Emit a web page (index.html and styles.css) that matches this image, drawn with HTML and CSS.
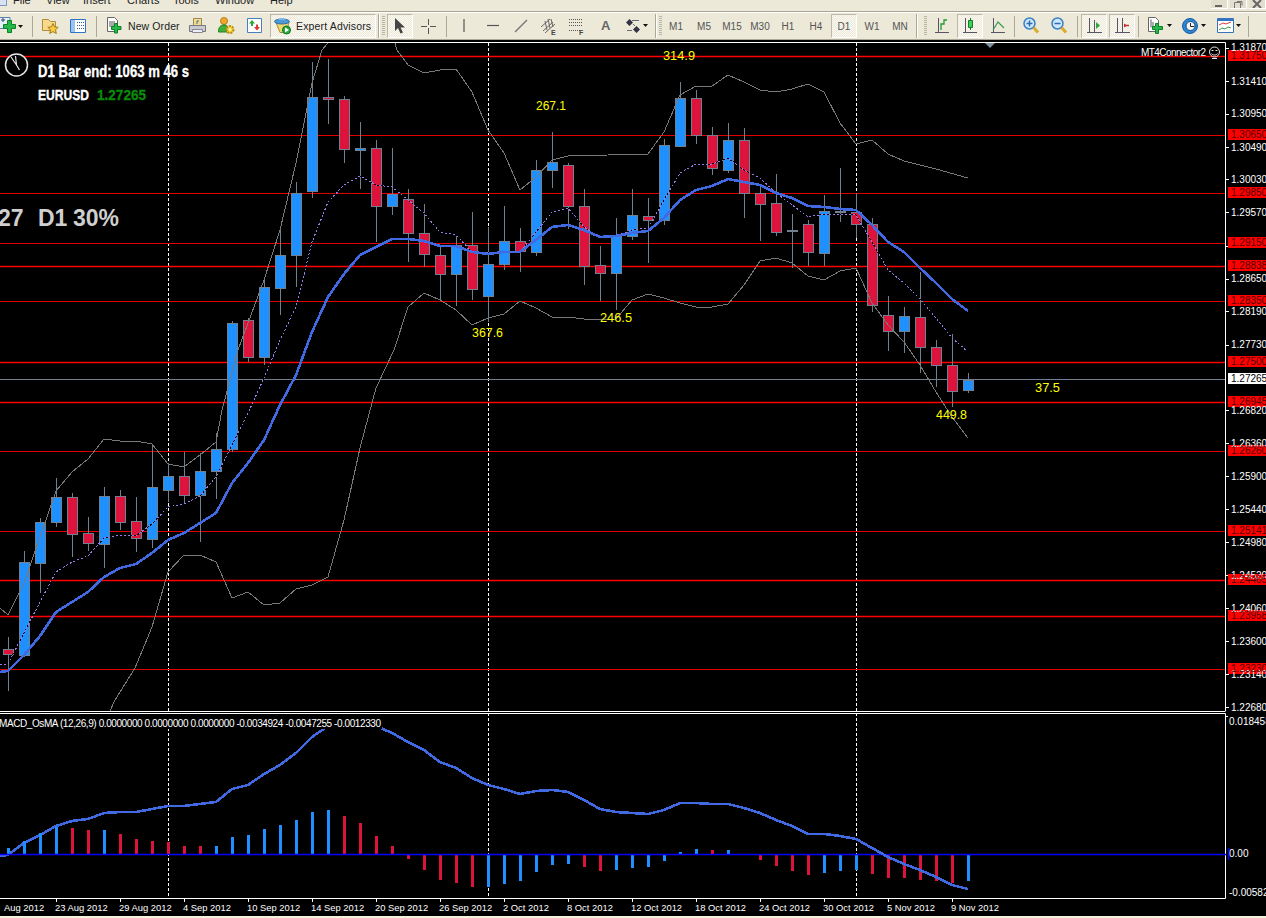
FILE: index.html
```html
<!DOCTYPE html>
<html lang="en">
<head>
<meta charset="utf-8">
<title>MetaTrader 4 - EURUSD D1</title>
<link rel="stylesheet" href="styles.css">
</head>
<body>
<header class="menubar">
  <span class="app-icon"></span>
  <span class="menu-item">File</span>
  <span class="menu-item">View</span>
  <span class="menu-item">Insert</span>
  <span class="menu-item">Charts</span>
  <span class="menu-item">Tools</span>
  <span class="menu-item">Window</span>
  <span class="menu-item">Help</span>
  <span class="win-buttons">
    <span class="win-btn"><svg width="16" height="8" viewBox="0 0 16 8"><path class="g-dark" d="M4 5h7v2H4z"/></svg></span>
    <span class="win-btn"><svg width="16" height="8" viewBox="0 0 16 8"><path class="s-dark" d="M4.5 2.5h6v6h-6zM7 1.5h5v4"/></svg></span>
    <span class="win-btn"><svg width="16" height="8" viewBox="0 0 16 8"><path class="s-dark2" d="M4 0l8 8M12 0L4 8"/></svg></span>
  </span>
</header>

<nav class="toolbar">
  <svg class="w16" height="18" viewBox="0 0 16 18"><path fill="#e6eefa" stroke="#5c82b4" d="M-2 .5h12v11H-2z"/><path stroke="#33486a" d="M1 3h4M3 1v4"/><path fill="#27b84a" stroke="#0d7f25" d="M7.5 3.5h4v4h4v4h-4v4h-4v-4h-4v-4h4z"/></svg>
  <svg class="w5 m2" height="18" viewBox="0 0 5 18"><path d="M0 8h5l-2.500 3z"/></svg>
  <i class="sep m9"></i>
  <svg class="w18 m8" height="18" viewBox="0 0 18 18"><path fill="#f6d98a" stroke="#b08c3a" d="M1.500 2.500h6l2 2h5v9h-13z"/><path fill="#f7cb45" stroke="#a67c14" d="M12 6.500l1.600 3.400 3.600.4-2.700 2.500.8 3.700-3.300-1.900-3.300 1.900.8-3.700-2.700-2.500 3.600-.4z"/></svg>
  <svg class="w16 m11" height="18" viewBox="0 0 16 18"><path fill="#fff" stroke="#2f74c8" d="M.5 2.500h15v13H.5z"/><path fill="#9cc2ee" d="M1 3h4v12H1z"/><path stroke="#2b5a94" stroke-dasharray="1 1" d="M7 5.500h7M7 8.500h7M7 11.500h7"/></svg>
  <i class="sep m10"></i>
  <svg class="w16 m10" height="18" viewBox="0 0 16 18"><path fill="#fff" stroke="#666" d="M.5.500h7l3 3v11H.5z"/><path stroke="#555" d="M2 5h6M2 7h6M2 9h6"/><path fill="#27b84a" stroke="#0d7f25" d="M7.500 6.500h3v3h3.500v3h-3.500v3.500h-3v-3.500h-3v-3h3z"/></svg>
  <span class="tb-label m5 w51">New Order</span>
  <svg class="w17 m10" height="18" viewBox="0 0 17 18"><path fill="#f3dc8c" stroke="#9a8a50" d="M4.500 1.500h8v7h-8z"/><path stroke="#3b6fb0" d="M8 4h2M8 4v3"/><path fill="#c9c9d2" stroke="#77777f" d="M.5 8.500h16v6h-16z"/><path fill="#eef" stroke="#88888f" d="M3.500 12.500h10v3h-10z"/></svg>
  <svg class="w17 m12" height="18" viewBox="0 0 17 18"><circle cx="6" cy="4" r="3.500" fill="#f0a830" stroke="#b97b12"/><path fill="#3fae3a" stroke="#22801f" d="M.5 15c0-5 2-7 5.500-7s4 1 4 7z"/><circle cx="12" cy="12.500" r="3.500" fill="#f5d13c" stroke="#b78c12" stroke-width="2" stroke-dasharray="2 1"/><circle cx="12" cy="12.500" r="1.200" fill="#fff6b8"/></svg>
  <svg class="w15 m12" height="18" viewBox="0 0 15 18"><path fill="#fff" stroke="#4a7fbe" d="M.5 1.500h14v14H.5z"/><path fill="#2fa53a" d="M5 3l3 3.500H6v2.500H4V6.500H2z"/><path fill="#dc3a30" d="M10 13.500L7 10h2V7.500h2V10h2z"/></svg>
  <div class="pressed ea-btn m8">
    <svg class="w17" height="18" viewBox="0 0 17 18"><path fill="#f2d76c" stroke="#a48b35" d="M2 5.500l4 10h6l3-10z"/><ellipse cx="8" cy="4.500" rx="7.500" ry="2.500" fill="#4d9bd6" stroke="#2a6ea8"/><path fill="#79b8e6" d="M4 3c1-2.500 7-2.500 8 0z"/><circle cx="12.500" cy="13" r="4" fill="#2bab3f" stroke="#0e7222"/><path fill="#fff" d="M11 10.500l4 2.500-4 2.500z"/></svg>
    <span class="tb-label ea-text">Expert Advisors</span>
  </div>
  <i class="dsep m2"></i>
  <i class="grip m2"></i>
  <div class="pressed tool-btn m2"><svg width="12" height="16" viewBox="0 0 12 16"><path fill="#444" d="M1 0v13l3-3 2.500 5.500 2.500-1L6.500 9.500H11z"/></svg></div>
  <svg class="w15 m8" height="18" viewBox="0 0 15 18"><path stroke="#555" d="M0 9.500h6M9 9.500h6M7.500 2v6M7.500 11v6"/></svg>
  <i class="sep m10"></i>
  <svg class="w14 m10" height="18" viewBox="0 0 14 18"><path stroke="#555" stroke-width="1.200" d="M7 2v13"/></svg>
  <svg class="w12 m16" height="18" viewBox="0 0 12 18"><path stroke="#555" stroke-width="1.200" d="M0 8.500h12"/></svg>
  <svg class="w14 m15" height="18" viewBox="0 0 14 18"><path stroke="#777" stroke-width="1.400" d="M1 15L13 3"/></svg>
  <svg class="w15 m13" height="18" viewBox="0 0 15 18"><path stroke="#666" d="M0 10l9-8M2 14l10-9M4 16L14 7M4 4l2 9M7 2l2 9M10 2l2 8"/><text class="ico-letter" x="10" y="18">E</text></svg>
  <svg class="w15 m13" height="18" viewBox="0 0 15 18"><path stroke="#555" stroke-dasharray="1 1" d="M0 2.500h14M0 5.500h14M0 8.500h14M0 13.500h11"/><text class="ico-letter" x="10" y="18">F</text></svg>
  <span class="tool-a m17">A</span>
  <svg class="w14 m17" height="18" viewBox="0 0 14 18"><path fill="#334" d="M3.500 2L7 5.500 3.500 9 0 5.500zM10.500 9l3.500 3.500-3.500 3.500L7 12.500z"/><path stroke="#667" d="M6 3.500h7M1 13.500h5M7 7l2 2"/></svg>
  <svg class="w5 m3" height="18" viewBox="0 0 5 18"><path d="M0 7h5l-2.500 3z"/></svg>
  <i class="dsep m7"></i>
  <i class="grip m2"></i>
  <span class="tf">M1</span>
  <span class="tf">M5</span>
  <span class="tf">M15</span>
  <span class="tf">M30</span>
  <span class="tf">H1</span>
  <span class="tf">H4</span>
  <span class="tf"><span class="pressed tf-on">D1</span></span>
  <span class="tf">W1</span>
  <span class="tf">MN</span>
  <i class="dsep m2"></i>
  <i class="grip m6"></i>
  <svg class="w14 m8" height="18" viewBox="0 0 14 18"><path stroke="#556" d="M3.500 1v15M0 15.500h14"/><path fill="none" stroke="#1f9a35" stroke-width="1.300" d="M6 13V7h3V3h3"/></svg>
  <div class="pressed tool-btn m8"><svg width="14" height="18" viewBox="0 0 14 18"><path stroke="#556" d="M2.500 1v15M0 15.500h14"/><path stroke="#167c2c" d="M7.500 1v12"/><path fill="#3fd057" stroke="#167c2c" d="M5.500 3.500h4v7h-4z"/></svg></div>
  <svg class="w14 m8" height="18" viewBox="0 0 14 18"><path stroke="#556" d="M2.500 1v15M0 15.500h14"/><path fill="none" stroke="#3b9a52" stroke-width="1.200" d="M2 13l5-8 6 6"/></svg>
  <i class="sep m9"></i>
  <svg class="w16 m8" height="18" viewBox="0 0 16 18"><circle cx="6.500" cy="6.500" r="5.500" fill="#cfe6fb" stroke="#3a80c4" stroke-width="1.500"/><path stroke="#2c6cb0" stroke-width="1.500" d="M3.500 6.500h6M6.500 3.500v6"/><path stroke="#d9ab2c" stroke-width="3" d="M10.500 10.500l4.500 5"/></svg>
  <svg class="w17 m12" height="18" viewBox="0 0 17 18"><circle cx="6.500" cy="6.500" r="5.500" fill="#cfe6fb" stroke="#3a80c4" stroke-width="1.500"/><path stroke="#2c6cb0" stroke-width="1.500" d="M3.500 6.500h6"/><path stroke="#d9ab2c" stroke-width="3" d="M10.500 10.500l4.500 5"/></svg>
  <i class="sep m9"></i>
  <div class="pressed tool-btn m3"><svg width="16" height="18" viewBox="0 0 16 18"><path stroke="#556" d="M3.500 1v15M1 15.500h15M8.500 3v13"/><path fill="#2aa83f" d="M10 5l4 3.500-4 3.500z"/></svg></div>
  <div class="pressed tool-btn m2"><svg width="16" height="18" viewBox="0 0 16 18"><path stroke="#556" d="M3.500 1v15M1 15.500h15M8.500 1v15"/><path stroke="#c42f2a" stroke-width="1.500" d="M10 8.500h5"/><path fill="#c42f2a" d="M10 6.500v4l3-2z"/></svg></div>
  <i class="sep m3"></i>
  <svg class="w16 m9" height="18" viewBox="0 0 16 18"><path fill="#fff" stroke="#666" d="M.5.500h7l3 3v11H.5z"/><path stroke="#556" d="M3 2.500v8M5 5v5"/><path fill="#27b84a" stroke="#0d7f25" d="M7.500 6.500h3v3h4v3h-4v4h-3v-4h-3v-3h3z"/></svg>
  <svg class="w5 m3" height="18" viewBox="0 0 5 18"><path d="M0 7h5l-2.500 3z"/></svg>
  <svg class="w16 m10" height="18" viewBox="0 0 16 18"><circle cx="8" cy="9" r="7.500" fill="#2c86d8" stroke="#1a5a9e"/><circle cx="8.500" cy="9" r="4.500" fill="#f4f4f4" stroke="#17477e"/><path fill="none" stroke="#222" d="M8.500 6v3.500H12"/></svg>
  <svg class="w5 m3" height="18" viewBox="0 0 5 18"><path d="M0 7h5l-2.500 3z"/></svg>
  <svg class="w17 m11" height="18" viewBox="0 0 17 18"><path fill="#fff" stroke="#3a74b8" d="M.5 1.500h16v14H.5z"/><path fill="#2f74c8" d="M1 2h15v2H1z"/><path fill="none" stroke="#d94040" d="M2 8l4-2 3 1 5-2"/><path fill="none" stroke="#38a04a" d="M2 13l3-2 3 1 3-2 3 1"/></svg>
  <svg class="w5 m2" height="18" viewBox="0 0 5 18"><path d="M0 7h5l-2.500 3z"/></svg>
  <i class="sep m7"></i>
</nav>

<svg class="chart" width="1266" height="876" viewBox="0 40 1266 876">
  <path class="frame" d="M0 42.500H1225.500V711M0 711.500H1225.500M0 713.500H1225.500V898.500H0"/>
  <path class="frame" d="M1226 48.500h3M1226 81.500h3M1226 114.500h3M1226 147.500h3M1226 179.500h3M1226 212.500h3M1226 246.500h3M1226 279.500h3M1226 311.500h3M1226 345.500h3M1226 410.500h3M1226 443.500h3M1226 476.500h3M1226 509.500h3M1226 542.500h3M1226 575.500h3M1226 608.500h3M1226 641.500h3M1226 674.500h3M1226 707.500h3M1226 716.500h2"/>
  <path class="frame" d="M56.500 899v3M120.500 899v3M184.500 899v3M248.500 899v3M312.500 899v3M376.500 899v3M440.500 899v3M504.500 899v3M568.500 899v3M632.500 899v3M696.500 899v3M760.500 899v3M824.500 899v3M888.500 899v3M952.500 899v3"/>

  <path class="vline" d="M168.500 43V898M488.500 43V898M856.500 43V898"/>
  <path class="hline-a" d="M0 56.500H1225M0 266.500H1225M0 362.500H1225M0 402.500H1225M0 580.500H1225M0 616.500H1225"/>
  <path class="hline-b" d="M0 135.500H1225M0 193.500H1225M0 243.500H1225M0 301.500H1225M0 451.500H1225M0 531.500H1225M0 669.500H1225"/>
  <path class="hline-c" d="M0 379.500H1225"/>

  <path class="wick" d="M8.500 637V691M24.500 551V657M40.500 518V593M56.500 478V527M72.500 493V557M88.500 517V551M104.500 487V568M120.500 490V530M136.500 497V552M152.500 444V548M168.500 463V502M184.500 452V503M200.500 453V542M216.500 433V499M232.500 321V452M248.500 318V362M264.500 278V365M280.500 230V315M296.500 182V287M312.500 62V198M328.500 59V124M344.500 96V163M360.500 122V189M376.500 140V242M392.500 148V215M408.500 189V262M424.500 204V267M440.500 247V301M456.500 235V306M472.500 212V300M488.500 227V322M504.500 206V270M520.500 228V272M536.500 160V256M552.500 132V188M568.500 163V229M584.500 189V285M600.500 246V301M616.500 218V310M632.500 189V240M648.500 198V263M664.500 139V225M680.500 82V146M696.500 90V144M712.500 127V175M728.500 123V173M744.500 128V218M760.500 186V241M776.500 174V236M792.500 214V268M808.500 220V266M824.500 195V266M840.500 168V222M856.500 193V238M872.500 218V312M888.500 296V351M904.500 307V353M920.500 272V373M936.500 340V387M952.500 334V407M968.500 373V393"/>

  <g class="body up">
    <rect x="19.500" y="562.500" height="93"/><rect x="35.500" y="522.500" height="41"/><rect x="51.500" y="497.500" height="25"/><rect x="99.500" y="496.500" height="48"/><rect x="147.500" y="487.500" height="52"/><rect x="163.500" y="476.500" height="14"/><rect x="195.500" y="471.500" height="24"/><rect x="211.500" y="449.500" height="22"/><rect x="227.500" y="323.500" height="126"/><rect x="259.500" y="287.500" height="70"/><rect x="275.500" y="255.500" height="33"/><rect x="291.500" y="193.500" height="62"/><rect x="307.500" y="97.500" height="94"/><rect x="355.500" y="148.500" height="2"/><rect x="387.500" y="194.500" height="12"/><rect x="451.500" y="245.500" height="29"/><rect x="483.500" y="264.500" height="32"/><rect x="499.500" y="241.500" height="23"/><rect x="531.500" y="170.500" height="82"/><rect x="547.500" y="162.500" height="8"/><rect x="611.500" y="236.500" height="37"/><rect x="627.500" y="215.500" height="21"/><rect x="659.500" y="145.500" height="75"/><rect x="675.500" y="98.500" height="48"/><rect x="723.500" y="140.500" height="30"/><rect x="787.500" y="230.500" height="1"/><rect x="819.500" y="211.500" height="42"/><rect x="835.500" y="211.500" height="1"/><rect x="899.500" y="316.500" height="15"/><rect x="963.500" y="380.500" height="10"/>
  </g>
  <g class="body down">
    <rect x="3.500" y="649.500" height="5"/><rect x="67.500" y="497.500" height="37"/><rect x="83.500" y="533.500" height="10"/><rect x="115.500" y="496.500" height="26"/><rect x="131.500" y="521.500" height="17"/><rect x="179.500" y="476.500" height="19"/><rect x="243.500" y="320.500" height="37"/><rect x="323.500" y="97.500" height="2"/><rect x="339.500" y="99.500" height="50"/><rect x="371.500" y="148.500" height="58"/><rect x="403.500" y="199.500" height="34"/><rect x="419.500" y="233.500" height="21"/><rect x="435.500" y="255.500" height="19"/><rect x="467.500" y="245.500" height="44"/><rect x="515.500" y="241.500" height="10"/><rect x="563.500" y="165.500" height="41"/><rect x="579.500" y="206.500" height="60"/><rect x="595.500" y="265.500" height="8"/><rect x="643.500" y="216.500" height="4"/><rect x="691.500" y="98.500" height="37"/><rect x="707.500" y="135.500" height="33"/><rect x="739.500" y="140.500" height="53"/><rect x="755.500" y="193.500" height="11"/><rect x="771.500" y="203.500" height="29"/><rect x="803.500" y="224.500" height="28"/><rect x="851.500" y="212.500" height="12"/><rect x="867.500" y="224.500" height="81"/><rect x="883.500" y="315.500" height="16"/><rect x="915.500" y="317.500" height="30"/><rect x="931.500" y="347.500" height="18"/><rect x="947.500" y="365.500" height="26"/>
  </g>

  <polyline class="bb" points="0,608 8,615 24,583 40,537 56,491 72,472 88,459 104,439 120,441 136,441 152,444 168,464 184,467 200,455 216,442 222,410 238,350 264,280 280,230 296,163 312,83 322,50 328,43"/>
  <polyline class="bb" points="395,43 397,50 408,65 424,73 440,70 456,69 472,92 488,130 504,153 520,190 536,177 552,160 568,156 608,155 648,154 664,132 680,95 696,86 712,86 728,75 744,82 760,90 776,92 792,89 808,84 824,92 840,123 856,144 872,140 888,154 904,161 936,169 968,178"/>
  <polyline class="bb" points="110,711 115,700 135,668 152,627 168,572 184,555 200,555 216,562 232,598 248,592 264,605 280,603 296,589 312,585 328,577 344,520 360,448 376,388 394,350 408,307 424,293 440,300 456,310 472,325 488,318 504,314 520,301 536,308 552,317 568,317 584,319 616,319 632,300 648,294 664,298 680,303 696,307 712,307 728,304 744,285 760,261 776,258 792,263 808,276 824,280 840,271 856,268 872,303 888,325 904,342 920,365 936,392 952,417 968,438"/>

  <polyline class="ma-under" points="0,664 8,664 24,633 40,602 56,572 72,562 88,556 104,538 120,535 136,536 152,524 168,507 184,504 200,496 216,477 232,445 248,413 264,378 280,340 296,307 312,242 328,202 344,185 360,176 376,185 392,187 408,200 424,213 440,232 456,235 472,252 488,253 504,252 520,252 536,232 552,212 568,208 584,227 600,238 616,236 632,230 648,228 664,200 680,173 696,164 712,164 728,158 744,170 760,178 776,193 792,205 808,217 824,214 840,214 856,215 872,242 888,270 904,283 920,299 936,318 952,338 967,351"/>
  <polyline class="ma-dots" points="0,664 8,664 24,633 40,602 56,572 72,562 88,556 104,538 120,535 136,536 152,524 168,507 184,504 200,496 216,477 232,445 248,413 264,378 280,340 296,307 312,242 328,202 344,185 360,176 376,185 392,187 408,200 424,213 440,232 456,235 472,252 488,253 504,252 520,252 536,232 552,212 568,208 584,227 600,238 616,236 632,230 648,228 664,200 680,173 696,164 712,164 728,158 744,170 760,178 776,193 792,205 808,217 824,214 840,214 856,215 872,242 888,270 904,283 920,299 936,318 952,338 967,351"/>
  <polyline class="ma-main" points="0,672 8,671 24,655 40,636 56,612 72,602 88,592 104,577 120,568 136,564 152,553 168,540 184,533 200,523 216,513 232,483 248,463 264,440 280,405 296,375 312,332 328,297 344,274 360,255 376,247 392,239 408,239 424,241 440,246 456,246 472,252 488,254 504,252 520,252 536,240 552,227 568,225 584,230 600,237 616,236 632,233 648,231 664,218 680,200 696,190 712,186 728,179 744,182 760,185 776,193 792,198 808,206 824,207 840,209 856,210 872,225 888,242 904,252 920,268 936,283 952,299 968,311"/>

  <g class="yellow">
    <text x="663" y="60" textLength="32" lengthAdjust="spacingAndGlyphs">314.9</text>
    <text x="536" y="110" textLength="30" lengthAdjust="spacingAndGlyphs">267.1</text>
    <text x="472" y="337" textLength="31" lengthAdjust="spacingAndGlyphs">367.6</text>
    <text x="600" y="322" textLength="32" lengthAdjust="spacingAndGlyphs">246.5</text>
    <text x="936" y="419" textLength="31" lengthAdjust="spacingAndGlyphs">449.8</text>
    <text x="1035" y="392" textLength="25" lengthAdjust="spacingAndGlyphs">37.5</text>
  </g>

  <g class="clock">
    <circle cx="16.500" cy="65" r="11"/>
    <path d="M16.500 65L11 57M16.500 65l-1-9M16.500 65l3 5"/>
  </g>
  <text class="impact" x="38" y="77" textLength="151" lengthAdjust="spacingAndGlyphs">D1 Bar end: 1063 m 46 s</text>
  <text class="impact small" x="38" y="100" textLength="51" lengthAdjust="spacingAndGlyphs">EURUSD</text>
  <text class="impact small green" x="97" y="100" textLength="49" lengthAdjust="spacingAndGlyphs">1.27265</text>
  <text class="big" x="-2" y="226">27</text>
  <text class="big" x="38" y="226">D1</text>
  <text class="big" x="73" y="226">30%</text>

  <text class="connector" x="1141" y="56" textLength="65">MT4Connector2</text>
  <g class="smiley">
    <circle cx="1214.500" cy="52" r="5"/>
    <path d="M1211.500 50.500h2M1215.500 50.500h2M1211.500 53.500c1 2 5 2 6 0M1212 58.500h5"/>
  </g>
  <path class="marker" d="M985 43h10l-5 5z"/>

  <g class="price">
    <text x="1231" y="247" >1.29110</text>
  </g>
  <g class="label-red">
    <rect x="1228" y="50" height="11"/><rect x="1228" y="129" height="11"/><rect x="1228" y="187" height="11"/><rect x="1228" y="237" height="11"/><rect x="1228" y="260" height="11"/><rect x="1228" y="295" height="11"/><rect x="1228" y="356" height="11"/><rect x="1228" y="396" height="11"/><rect x="1228" y="445" height="11"/><rect x="1228" y="525" height="11"/><rect x="1228" y="574" height="11"/><rect x="1228" y="610" height="11"/><rect x="1228" y="663" height="11"/>
  </g>
  <rect class="label-white" x="1228" y="373" width="38" height="11"/>

  <g class="price">
    <text x="1231" y="51">1.31870</text><text x="1231" y="85">1.31410</text><text x="1231" y="117">1.30950</text><text x="1231" y="151">1.30490</text><text x="1231" y="183">1.30030</text><text x="1231" y="216">1.29570</text><text x="1231" y="282">1.28650</text><text x="1231" y="315">1.28190</text><text x="1231" y="348">1.27730</text><text x="1231" y="414">1.26820</text><text x="1231" y="447">1.26360</text><text x="1231" y="480">1.25900</text><text x="1231" y="513">1.25440</text><text x="1231" y="546">1.24980</text><text x="1231" y="579">1.24520</text><text x="1231" y="612">1.24060</text><text x="1231" y="645">1.23600</text><text x="1231" y="678">1.23140</text><text x="1231" y="711">1.22680</text>
    <text x="1229" y="725">0.018458</text><text x="1229" y="857">0.00</text><text x="1229" y="896">-0.00582</text>
  </g>
  <g class="label-text">
    <text x="1231" y="59">1.31750</text><text x="1231" y="138">1.30650</text><text x="1231" y="196">1.29850</text><text x="1231" y="246">1.29150</text><text x="1231" y="269">1.28838</text><text x="1231" y="304">1.28350</text><text x="1231" y="365">1.27500</text><text x="1231" y="382">1.27265</text><text x="1231" y="405">1.26945</text><text x="1231" y="454">1.26260</text><text x="1231" y="534">1.25141</text><text x="1231" y="583">1.24465</text><text x="1231" y="619">1.23958</text><text x="1231" y="672">1.23230</text>
  </g>

  <polyline class="ma-main" points="0,856 8,855 24,843 40,835 56,826 72,821 88,819 104,813 120,812 136,812 152,809 168,806 184,806 200,804 216,802 232,789 248,785 264,774 280,765 296,753 312,737 328,726 344,722 360,722 376,726 392,733 408,742 424,750 440,762 456,768 472,778 488,785 504,789 520,794 536,791 552,790 568,792 584,800 600,809 616,812 632,813 648,814 664,810 680,803 696,803 712,804 728,804 744,808 760,813 776,820 792,826 808,834 824,834 840,836 856,839 872,848 888,857 904,864 920,870 936,877 952,885 968,889"/>
  <rect class="label-bg" x="0" y="714" width="382" height="15"/>
  <text class="macd" x="-1" y="727" textLength="382">MACD_OsMA (12,26,9) 0.0000000 0.0000000 0.0000000 -0.0034924 -0.0047255 -0.0012330</text>

  <g class="hist up">
    <rect x="7" y="848" height="6"/><rect x="23" y="841" height="13"/><rect x="39" y="833" height="21"/><rect x="55" y="827" height="27"/><rect x="103" y="830" height="24"/><rect x="215" y="846" height="8"/><rect x="231" y="837" height="17"/><rect x="247" y="835" height="19"/><rect x="263" y="829" height="25"/><rect x="279" y="825" height="29"/><rect x="295" y="820" height="34"/><rect x="311" y="812" height="42"/><rect x="327" y="810" height="44"/>
    <rect x="487" y="855" height="32"/><rect x="503" y="855" height="29"/><rect x="519" y="855" height="26"/><rect x="535" y="855" height="17"/><rect x="551" y="855" height="10"/><rect x="567" y="855" height="9"/><rect x="615" y="855" height="15"/><rect x="631" y="855" height="13"/><rect x="647" y="855" height="12"/><rect x="663" y="855" height="6"/><rect x="679" y="852" height="2"/><rect x="695" y="849" height="5"/><rect x="727" y="850" height="4"/><rect x="823" y="855" height="18"/><rect x="839" y="855" height="16"/><rect x="855" y="855" height="15"/><rect x="967" y="855" height="26"/>
  </g>
  <g class="hist down">
    <rect x="71" y="828" height="26"/><rect x="87" y="830" height="24"/><rect x="119" y="834" height="20"/><rect x="135" y="839" height="15"/><rect x="151" y="841" height="13"/><rect x="167" y="842" height="12"/><rect x="183" y="846" height="8"/><rect x="199" y="846" height="8"/><rect x="343" y="816" height="38"/><rect x="359" y="823" height="31"/><rect x="375" y="836" height="18"/><rect x="391" y="846" height="8"/>
    <rect x="407" y="855" height="4"/><rect x="423" y="855" height="15"/><rect x="439" y="855" height="25"/><rect x="455" y="855" height="28"/><rect x="471" y="855" height="32"/><rect x="583" y="855" height="12"/><rect x="599" y="855" height="16"/><rect x="711" y="850" height="4"/><rect x="759" y="855" height="5"/><rect x="775" y="855" height="11"/><rect x="791" y="855" height="16"/><rect x="807" y="855" height="20"/><rect x="871" y="855" height="19"/><rect x="887" y="855" height="23"/><rect x="903" y="855" height="23"/><rect x="919" y="855" height="25"/><rect x="935" y="855" height="26"/><rect x="951" y="855" height="28"/>
  </g>
  <path class="zero" d="M0 854.500H1226M1228.500 848V860"/>
  <polyline class="ma-main" points="872,848 888,857 904,864 920,870 936,877 952,885 968,889"/>

  <g class="date">
    <text x="4" y="911">Aug 2012</text><text x="55" y="911">23 Aug 2012</text><text x="119" y="911">29 Aug 2012</text><text x="183" y="911">4 Sep 2012</text><text x="247" y="911">10 Sep 2012</text><text x="311" y="911">14 Sep 2012</text><text x="375" y="911">20 Sep 2012</text><text x="439" y="911">26 Sep 2012</text><text x="503" y="911">2 Oct 2012</text><text x="567" y="911">8 Oct 2012</text><text x="631" y="911">12 Oct 2012</text><text x="695" y="911">18 Oct 2012</text><text x="759" y="911">24 Oct 2012</text><text x="823" y="911">30 Oct 2012</text><text x="887" y="911">5 Nov 2012</text><text x="951" y="911">9 Nov 2012</text>
  </g>
</svg>
</body>
</html>
```
FILE: styles.css
```css
html, body { margin: 0; padding: 0; }
body {
  width: 1266px;
  height: 918px;
  overflow: hidden;
  background: #f4f1dc;
  font-family: "Liberation Sans", Arial, sans-serif;
}

/* menu strip, cut off by the top of the picture */
.menubar {
  display: grid;
  grid-template-columns: 13px 33px 37px 44px 46px 42px 55px 1fr auto;
  height: 11px;
  background: #ece9d8;
  border-bottom: 1px solid #a9a696;
  overflow: hidden;
  font-size: 11px;
  line-height: 12px;
  color: #222;
}
.app-icon {
  display: block;
  width: 6px;
  height: 5px;
  background: #d7e2f3;
  border-right: 1px solid #7d97c4;
  border-bottom: 1px solid #7d97c4;
}
.menu-item { display: block; margin-top: -6px; white-space: nowrap; }
.win-buttons { grid-column: 9; display: flex; gap: 2px; align-items: flex-start; }
.win-btn {
  display: block;
  width: 16px;
  height: 8px;
  background: #e2dfcf;
  border: solid #fff;
  border-width: 0 1px 1px 0;
}
.win-btn svg { display: block; }
.g-dark { fill: #666; }
.s-dark { fill: none; stroke: #777; }
.s-dark2 { fill: none; stroke: #666; stroke-width: 2; }

/* toolbar strip */
.toolbar {
  display: flex;
  align-items: center;
  box-sizing: border-box;
  height: 28px;
  background: #ece9d8;
  border-top: 1px solid #fff;
  border-bottom: 1px solid #aca899;
  overflow: hidden;
}
.toolbar svg { display: block; flex: none; fill: #111; overflow: hidden; }
.tb-label { font-size: 10.500px; color: #222; white-space: nowrap; flex: none; letter-spacing: .1px; }
.ico-letter { font-size: 7px; font-weight: 700; fill: #444; }
.tool-a { font-size: 13px; font-weight: 700; color: #666; width: 8px; line-height: 14px; flex: none; }

.w5 { width: 5px; } .w12 { width: 12px; } .w14 { width: 14px; } .w15 { width: 15px; }
.w16 { width: 16px; } .w17 { width: 17px; } .w18 { width: 18px; } .w51 { width: 51px; }
.m2 { margin-left: 2px; } .m3 { margin-left: 3px; } .m5 { margin-left: 5px; } .m6 { margin-left: 6px; }
.m7 { margin-left: 7px; } .m8 { margin-left: 8px; } .m9 { margin-left: 9px; } .m10 { margin-left: 10px; }
.m11 { margin-left: 11px; } .m12 { margin-left: 12px; } .m13 { margin-left: 13px; } .m15 { margin-left: 15px; }
.m16 { margin-left: 16px; } .m17 { margin-left: 17px; }

.sep { display: block; flex: none; width: 1px; height: 21px; background: #aca899; }
.dsep { display: block; flex: none; width: 1px; height: 24px; background: #aca899; border-right: 1px solid #fff; }
.grip {
  display: block;
  flex: none;
  width: 3px;
  height: 20px;
  background: repeating-linear-gradient(#b8b5a4 0 1px, transparent 1px 2px);
}
.pressed {
  box-sizing: border-box;
  border: 1px solid;
  border-color: #bdb9a6 #fff #fff #bdb9a6;
  background: repeating-conic-gradient(#fbfaf5 0 25%, #ece9d8 0 50%) 0 0 / 2px 2px;
}
.ea-btn {
  display: flex;
  flex: none;
  align-items: center;
  gap: 5px;
  width: 106px;
  height: 24px;
  padding-left: 3px;
}
.ea-text { letter-spacing: .15px; }
.tool-btn {
  display: flex;
  flex: none;
  align-items: center;
  justify-content: center;
  width: 26px;
  height: 24px;
}
.tf {
  display: flex;
  flex: none;
  align-items: center;
  justify-content: center;
  width: 28px;
  height: 24px;
  font-size: 10px;
  color: #555;
}
.tf-on {
  display: flex;
  align-items: center;
  justify-content: center;
  width: 26px;
  height: 24px;
}

/* chart */
.chart { display: block; background: #000; }
.chart text { font-family: "Liberation Sans", Arial, sans-serif; }
.frame { fill: none; stroke: #fff; stroke-width: 1; }
.vline { fill: none; stroke: #fff; stroke-width: 1; stroke-dasharray: 3 2; }
.hline-a { fill: none; stroke: #ff0000; stroke-width: 1.300; }
.hline-b { fill: none; stroke: #e00000; stroke-width: 1; }
.hline-c { fill: none; stroke: #708090; stroke-width: 1; }
.wick { fill: none; stroke: #708090; stroke-width: 1; }
.body rect { width: 10px; stroke: #708090; stroke-width: 1; }
.body.up rect { fill: #1e90ff; }
.body.down rect { fill: #dc143c; }
.bb { fill: none; stroke: #787878; stroke-width: 1; shape-rendering: crispEdges; }
.ma-under { fill: none; stroke: #000; stroke-width: 1; shape-rendering: crispEdges; }
.ma-dots { fill: none; stroke: #9b78e6; stroke-width: 1; stroke-dasharray: 2 2; shape-rendering: crispEdges; }
.ma-main { fill: none; stroke: #4169e1; stroke-width: 2.600; shape-rendering: crispEdges; }
.yellow text { font-size: 13px; fill: #ffff00; }
.clock circle { fill: #000; stroke: #e6e6e6; stroke-width: 1.500; }
.clock path { fill: none; stroke: #e6e6e6; stroke-width: 1.200; }
.impact { font-size: 16.500px; font-weight: 700; fill: #fff; stroke: #fff; stroke-width: .35px; }
.impact.small { font-size: 15px; }
.impact.green { fill: #0a8a0a; stroke: #0a8a0a; }
.big { font-size: 23px; font-weight: 700; fill: #cfcfcf; }
.price text { font-size: 10px; fill: #fff; }
.date text { font-size: 9.400px; fill: #fff; }
.macd { font-size: 10px; fill: #fff; }
.connector { font-size: 10px; fill: #fff; }
.smiley circle { fill: none; stroke: #e8e8e8; }
.smiley path { fill: none; stroke: #e8e8e8; }
.marker { fill: #7f8fa0; }
.label-red rect { width: 38px; fill: #ff0000; }
.label-white { fill: #fff; }
.label-text text { font-size: 10px; fill: #520000; }
.label-text text:nth-child(8) { fill: #000; }
.label-bg { fill: #000; }
.hist rect { width: 3px; }
.hist.up rect { fill: #1e90ff; }
.hist.down rect { fill: #dc143c; }
.zero { fill: none; stroke: #0000ff; stroke-width: 1.500; }
```
